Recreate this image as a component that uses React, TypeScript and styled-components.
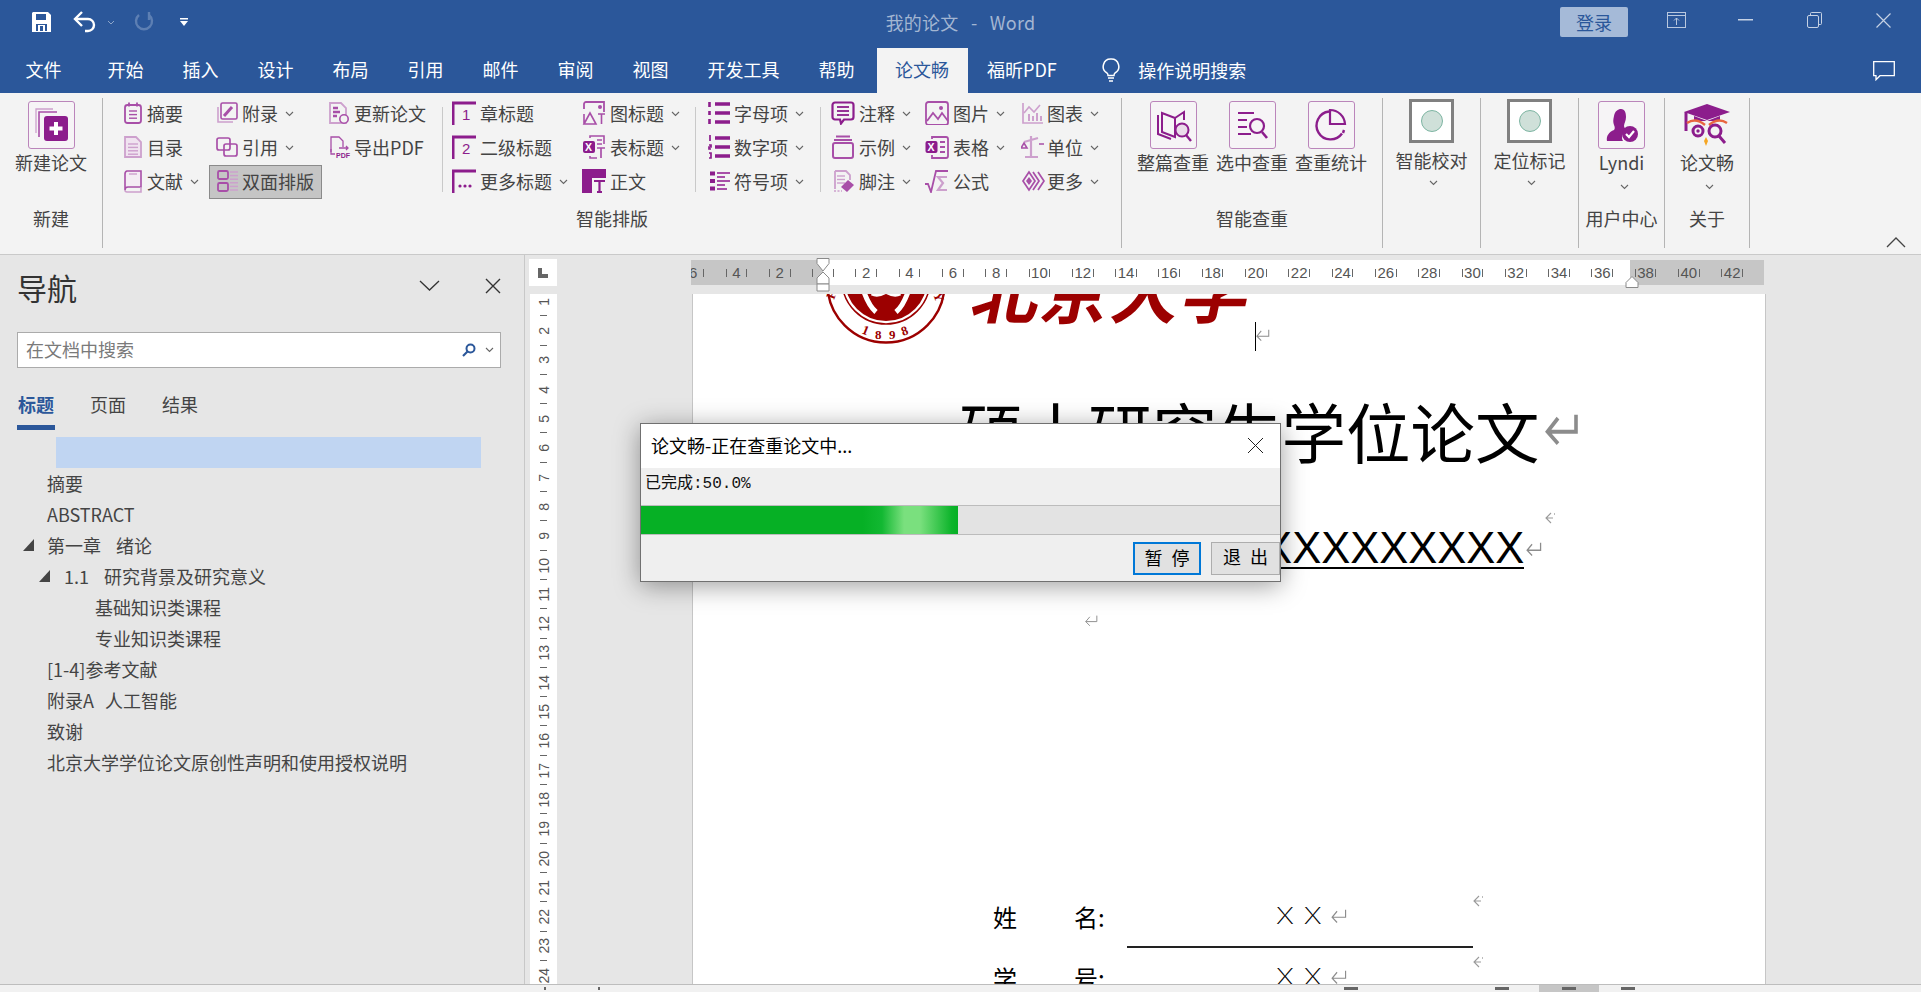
import React from "react";
import styled, { createGlobalStyle } from "styled-components";

const P = "#8c1d8c";
const M = "#a84fa8";
const L = "#cda0cd";
const FONT = `"Noto Sans CJK SC", "Noto Sans", sans-serif`;

const Global = createGlobalStyle`
  html, body { margin: 0; padding: 0; background: #e6e6e6; overflow: hidden; }
  * { box-sizing: border-box; }
  body { font-family: ${FONT}; }
`;

const Root = styled.div`
  position: relative;
  width: 1921px;
  height: 992px;
  overflow: hidden;
  display: flex;
  flex-direction: column;
  font-family: ${FONT};
`;

/* ---------- title bar ---------- */
const TitleBar = styled.div`
  height: 48px;
  background: #2b579a;
  display: grid;
  grid-template-columns: 1fr auto 1fr;
  align-items: flex-start;
`;
const Quick = styled.div`
  display: flex;
  align-items: center;
  height: 44px;
  padding-left: 32px;
`;
const QuickIcon = styled.svg<{ $gap?: number }>`
  display: block;
  margin-left: ${(p) => p.$gap ?? 0}px;
`;
const DocTitle = styled.div`
  height: 44px;
  line-height: 44px;
  font-size: 18px;
  color: #a3b6d2;
  white-space: pre;
  word-spacing: 2px;
  letter-spacing: 0.2px;
`;
const WinControls = styled.div`
  display: flex;
  justify-content: flex-end;
  align-items: flex-start;
  padding-right: 3px;
`;
const Login = styled.div`
  width: 68px;
  height: 30px;
  margin: 7px 14px 0 0;
  border-radius: 2px;
  background: #a5bad8;
  color: #2b579a;
  font-size: 18px;
  line-height: 30px;
  text-align: center;
`;
const WinBtn = styled.div`
  width: 69px;
  height: 40px;
  display: flex;
  align-items: center;
  justify-content: center;
`;

/* ---------- tabs ---------- */
const TabBar = styled.div`
  height: 45px;
  background: #2b579a;
  display: flex;
  align-items: stretch;
  padding-left: 6px;
`;
const Tab = styled.div`
  padding: 0 19.5px;
  color: #fff;
  font-size: 18px;
  line-height: 43px;
  white-space: nowrap;
`;
const FileTab = styled(Tab)`
  margin-right: 7px;
`;
const ActiveTab = styled(Tab)`
  padding: 0 18.5px;
  margin-left: 2.5px;
  background: #f3f3f3;
  color: #2b579a;
`;
const HelpSearch = styled.div`
  display: flex;
  align-items: center;
  margin-left: 26px;
  gap: 18px;
  color: #fff;
  font-size: 18px;
  height: 43px;
`;
const CommentBtn = styled.div`
  margin-left: auto;
  padding: 13px 26px 0 0;
`;

/* ---------- ribbon ---------- */
const Ribbon = styled.div`
  position: relative;
  height: 162px;
  background: #f3f3f3;
  border-bottom: 1px solid #c9c9c9;
  display: flex;
  align-items: flex-start;
  color: #444;
  font-size: 18px;
`;
const Group = styled.div<{ $w: number }>`
  width: ${(p) => p.$w}px;
  height: 150px;
  margin-top: 5px;
  border-right: 1px solid #b4b4b4;
  display: flex;
  flex-direction: column;
`;
const GroupBody = styled.div<{ $center?: boolean; $pad?: number }>`
  height: 110px;
  display: flex;
  align-items: flex-start;
  justify-content: ${(p) => (p.$center ? "center" : "flex-start")};
  padding-left: ${(p) => p.$pad ?? 0}px;
`;
const GroupLabel = styled.div`
  height: 20px;
  line-height: 20px;
  text-align: center;
  font-size: 18px;
  color: #444;
`;
const BigBtn = styled.div`
  width: 79px;
  display: flex;
  flex-direction: column;
  align-items: center;
  padding-top: 3px;
  flex-shrink: 0;
`;
const IconBox = styled.div`
  width: 47px;
  height: 48px;
  border: 1px solid #bb85bb;
  border-radius: 3px;
  background: #f6f4f6;
  display: flex;
  align-items: center;
  justify-content: center;
`;
const BigText = styled.div`
  margin-top: 2px;
  height: 22px;
  line-height: 22px;
  white-space: nowrap;
  font-size: 18px;
`;
const DropChevron = styled.div<{ $top: number; $shift?: number }>`
  margin-top: ${(p) => p.$top}px;
  margin-left: ${(p) => p.$shift ?? 0}px;
  line-height: 0;
`;
const StatusTile = styled.div`
  width: 45px;
  height: 44px;
  border: 3px solid #808080;
  background: #fff;
  display: flex;
  align-items: center;
  justify-content: center;
`;
const StatusDot = styled.div`
  width: 22px;
  height: 22px;
  border-radius: 50%;
  background: #cfe0d9;
  border: 1px solid #7db5a2;
`;
const TileBtn = styled(BigBtn)`
  padding-top: 1px;
`;
const TileText = styled(BigText)`
  margin-top: 6px;
`;
const Col = styled.div<{ $w: number; $pad: number; $slot: number }>`
  width: ${(p) => p.$w}px;
  flex-shrink: 0;
  margin-top: -1px;
  --pad: ${(p) => p.$pad}px;
  --slot: ${(p) => p.$slot}px;
`;
const Item = styled.div<{ $on?: boolean }>`
  height: 34px;
  display: flex;
  align-items: center;
  padding-left: var(--pad);
  padding-bottom: 2px;
  white-space: nowrap;
  font-size: 18px;
  background: ${(p) => (p.$on ? "#c5c5c5" : "transparent")};
  box-shadow: ${(p) => (p.$on ? "inset 0 0 0 1px #8a8a8a" : "none")};
`;
const ItemIcon = styled.span`
  width: var(--slot);
  flex-shrink: 0;
  display: flex;
  align-items: center;
  line-height: 0;
`;
const ItemChev = styled.span`
  margin-left: 7px;
  line-height: 0;
`;
const VSep = styled.div`
  width: 1px;
  height: 85px;
  margin-top: 9px;
  background: #c9c9c9;
  flex-shrink: 0;
`;
const Collapse = styled.div`
  position: absolute;
  right: 15px;
  bottom: 6px;
  line-height: 0;
`;

/* ---------- workspace ---------- */
const Workspace = styled.div`
  flex: 1;
  min-height: 0;
  display: flex;
  background: #e6e6e6;
`;
const Nav = styled.div`
  width: 525px;
  flex-shrink: 0;
  border-right: 1px solid #c8c8c8;
  padding: 0 23px 0 17px;
  color: #444;
`;
const NavHead = styled.div`
  height: 77px;
  display: flex;
  align-items: center;
  padding-top: 0;
`;
const NavTitle = styled.div`
  font-size: 30px;
  line-height: 40px;
  color: #333;
  margin: -14px 0 0 0;
`;
const NavBtns = styled.div`
  margin-left: auto;
  display: flex;
  align-items: center;
  gap: 45px;
  margin-top: -16px;
`;
const SearchBox = styled.div`
  height: 36px;
  width: 484px;
  background: #fff;
  border: 1px solid #ababab;
  display: flex;
  align-items: center;
  padding: 0 6px 3px 8px;
  font-size: 18px;
  color: #7a7a7a;
`;
const SearchTools = styled.div`
  margin-left: auto;
  display: flex;
  align-items: center;
  gap: 9px;
  line-height: 0;
  margin-top: 2px;
`;
const NavTabs = styled.div`
  display: flex;
  gap: 35px;
  margin-top: 21px;
  height: 41px;
  padding-left: 1px;
  margin-bottom: 7px;
`;
const NavTab = styled.div<{ $on?: boolean }>`
  position: relative;
  font-size: 18px;
  line-height: 30px;
  color: ${(p) => (p.$on ? "#2b579a" : "#444")};
  font-weight: ${(p) => (p.$on ? 700 : 400)};
  border-bottom: ${(p) => (p.$on ? "5px solid #2b579a" : "none")};
  height: 41px;
  padding: 0 1px;
  margin-left: -1px;
`;
const NavHighlight = styled.div`
  height: 31px;
  width: 425px;
  margin: 0 0 -1px 39px;
  background: #c0d5f2;
`;
const NavRow = styled.div<{ $pad: number }>`
  height: 31px;
  display: flex;
  align-items: center;
  padding-left: ${(p) => p.$pad}px;
  font-size: 18px;
  color: #444;
  white-space: pre;
`;
const Tri = styled.svg<{ $after: number }>`
  margin-right: ${(p) => p.$after}px;
  flex-shrink: 0;
`;
const NavGap = styled.span<{ $w: number }>`
  display: inline-block;
  width: ${(p) => p.$w}px;
`;

const VRulerCol = styled.div`
  width: 32px;
  flex-shrink: 0;
  padding: 4px 0 0 4px;
  display: flex;
  flex-direction: column;
`;
const Corner = styled.div`
  width: 28px;
  height: 27px;
  background: #fff;
  display: flex;
  align-items: center;
  justify-content: center;
`;
const VRuler = styled.div`
  flex: 1;
  min-height: 0;
  margin: 8px 0 0 1px;
  background: #fff;
  overflow: hidden;
`;
const VCells = styled.div`
  margin-top: -7px;
`;
const VCell = styled.div`
  height: 29.3px;
  position: relative;
  display: flex;
  align-items: center;
  justify-content: center;
`;
const VNum = styled.span`
  writing-mode: vertical-rl;
  transform: rotate(180deg);
  font: 14px "Liberation Sans", sans-serif;
  color: #555;
  line-height: 14px;
`;
const VTick = styled.i`
  position: absolute;
  left: 10px;
  bottom: 0;
  width: 7px;
  height: 1px;
  background: #666;
`;

const DocArea = styled.div`
  flex: 1;
  min-width: 0;
  display: flex;
  flex-direction: column;
  padding-left: 134px;
`;
const HRulerRow = styled.div`
  position: relative;
  height: 39px;
  padding-top: 5px;
  flex-shrink: 0;
`;
const HRuler = styled.div`
  width: 1073px;
  height: 25px;
  background: linear-gradient(
    90deg,
    #c6c6c6 0,
    #c6c6c6 132px,
    #fff 132px,
    #fff 939px,
    #c6c6c6 939px,
    #c6c6c6 100%
  );
  overflow: hidden;
  display: flex;
  align-items: center;
  padding-left: 0;
`;
const HCells = styled.div`
  display: flex;
  margin-left: -19.6px;
`;
const HCell = styled.div`
  width: 43.3px;
  flex-shrink: 0;
  padding: 0 10.8px;
  display: flex;
  align-items: center;
  justify-content: space-between;
  position: relative;
  height: 25px;
`;
const HTick = styled.i`
  width: 1px;
  height: 8px;
  background: #666;
`;
const HNum = styled.span`
  position: absolute;
  left: 0;
  right: 0;
  text-align: center;
  font: 15px/25px "Liberation Sans", sans-serif;
  color: #555;
`;
const Marker = styled.svg<{ $x: number; $y: number }>`
  position: absolute;
  left: ${(p) => p.$x}px;
  top: ${(p) => p.$y}px;
`;
const Page = styled.div`
  position: relative;
  width: 1074px;
  margin-left: 1px;
  flex: 1;
  min-height: 0;
  overflow: hidden;
  background: #fff;
  border-left: 1px solid #c6c6c6;
  border-right: 1px solid #c6c6c6;
`;
const LogoRow = styled.div`
  height: 50px;
  display: flex;
  align-items: flex-end;
  padding-left: 133px;
`;
const Seal = styled.svg`
  flex-shrink: 0;
  display: block;
`;
const Calligraphy = styled.div`
  margin: 0 0 -1px 24px;
  font-size: 68px;
  font-weight: 700;
  line-height: 70px;
  height: 70px;
  letter-spacing: 2px;
  color: #9c0000;
  white-space: nowrap;
  transform: skewX(-12deg) translateY(-21px);
`;
const Caret = styled.div`
  position: absolute;
  left: 562px;
  top: 28px;
  width: 1px;
  height: 29px;
  background: #000;
`;
const CaretMark = styled.div`
  position: absolute;
  left: 562px;
  top: 35px;
  line-height: 0;
`;
const ThesisTitle = styled.div`
  margin-top: 56px;
  height: 60px;
  padding-left: 266px;
  display: flex;
  align-items: center;
  font-size: 64.5px;
  line-height: 60px;
  color: #000;
  white-space: nowrap;
`;
const MarkRow = styled.div<{ $pad: number; $top: number; $h?: number }>`
  margin-top: ${(p) => p.$top}px;
  padding-left: ${(p) => p.$pad}px;
  height: ${(p) => p.$h ?? 12}px;
  line-height: 0;
`;
const SchoolRow = styled.div`
  margin-top: 6px;
  height: 39px;
  padding-left: 338px;
  display: flex;
  align-items: flex-start;
`;
const SchoolText = styled.span`
  font-family: "Liberation Sans Narrow", "Liberation Sans", sans-serif;
  font-size: 43.5px;
  line-height: 36px;
  height: 39px;
  color: #000;
  border-bottom: 2.5px solid #000;
  white-space: nowrap;
`;
const MarkInline = styled.span<{ $left: number; $top?: number }>`
  margin-left: ${(p) => p.$left}px;
  margin-top: ${(p) => p.$top ?? 0}px;
  line-height: 0;
  display: block;
`;
const NameRow = styled.div`
  margin-top: -3px;
  height: 25px;
  padding-left: 300px;
  display: flex;
  align-items: center;
  font-size: 24px;
  line-height: 25px;
  color: #000;
  white-space: nowrap;
`;
const NameCell = styled.span<{ $w: number }>`
  width: ${(p) => p.$w}px;
  flex-shrink: 0;
`;
const NameValue = styled.span`
  display: inline-block;
  font-family: Inter, "Liberation Sans", sans-serif;
  font-weight: 200;
  font-size: 23px;
  letter-spacing: 8px;
  width: 54px;
  flex-shrink: 0;
  transform: scaleX(1.22);
  transform-origin: left center;
`;
const NameLine = styled.div`
  margin: 17px 0 0 434px;
  width: 346px;
  height: 2px;
  background: #222;
`;

const StatusBar = styled.div`
  height: 8px;
  flex-shrink: 0;
  background: #f1f1f1;
  border-top: 1px solid #bdbdbd;
  display: flex;
  align-items: flex-start;
  padding-left: 544px;
`;
const StatusMark = styled.i<{ $gap: number; $w: number }>`
  display: block;
  height: 3px;
  margin: 2px 0 0 ${(p) => p.$gap}px;
  width: ${(p) => p.$w}px;
  background: #666;
`;
const StatusOn = styled.div`
  width: 60px;
  height: 8px;
  margin-left: 30px;
  background: #c6c6c6;
  display: flex;
  justify-content: center;
`;

/* ---------- dialog ---------- */
const Dialog = styled.div`
  position: absolute;
  left: 640px;
  top: 423px;
  width: 641px;
  height: 159px;
  border: 1px solid #707070;
  background: #efefef;
  box-shadow: 0 4px 24px rgba(0, 0, 0, 0.38);
  display: flex;
  flex-direction: column;
  color: #000;
`;
const DialogHead = styled.div`
  height: 44px;
  background: #fff;
  display: flex;
  align-items: center;
  justify-content: space-between;
  padding: 0 16px 2px 10px;
  font-size: 18px;
`;
const DialogStatus = styled.div`
  height: 37px;
  padding-left: 4px;
  line-height: 32px;
  font-family: "Liberation Mono", "Noto Sans CJK SC", monospace;
  font-size: 16px;
  color: #111;
`;
const Track = styled.div`
  height: 30px;
  background: #e3e3e3;
  border-top: 1px solid #bcbcbc;
  border-bottom: 1px solid #bcbcbc;
`;
const Fill = styled.div`
  height: 100%;
  background: linear-gradient(
    90deg,
    #06b025 0,
    #06b025 70%,
    #12b832 76%,
    #7ae07e 83%,
    #7ae07e 88%,
    #0db42b 98%,
    #06b025 100%
  );
`;
const DialogButtons = styled.div`
  flex: 1;
  display: flex;
  justify-content: flex-end;
  gap: 10px;
  padding-top: 7px;
`;
const DlgBtn = styled.div<{ $primary?: boolean }>`
  width: ${(p) => (p.$primary ? 68 : 69)}px;
  height: 33px;
  background: #e1e1e1;
  border: ${(p) => (p.$primary ? "2px solid #0078d7" : "1px solid #adadad")};
  font-size: 18px;
  line-height: 27px;
  text-align: center;
  letter-spacing: 9px;
  padding-left: 9px;
  white-space: nowrap;
`;

/* ---------- drawings ---------- */
const Chev = ({ c = "#666" }: { c?: string }) => (
  <svg width="9" height="6" viewBox="0 0 9 6">
    <path d="M1 1l3.5 3.5L8 1" fill="none" stroke={c} strokeWidth="1.1" />
  </svg>
);
const S = ({ children, w = 24, h = 24 }: { children: React.ReactNode; w?: number; h?: number }) => (
  <svg width={w} height={h} viewBox={`0 0 ${w} ${h}`} fill="none">
    {children}
  </svg>
);
const Lines = ({ x, y, w, n, gap, c, sw = 1.4 }: { x: number; y: number; w: number; n: number; gap: number; c: string; sw?: number }) => (
  <>
    {Array.from({ length: n }).map((_, i) => (
      <path key={i} d={`M${x} ${y + i * gap}h${w}`} stroke={c} strokeWidth={sw} />
    ))}
  </>
);
const Corner1 = ({ label, dots }: { label?: string; dots?: boolean }) => (
  <S>
    <path d="M1 24V2h23" stroke={P} strokeWidth="3" />
    {label && (
      <text x="10" y="19" fontSize="15" fill={P} fontFamily="Liberation Sans">
        {label}
      </text>
    )}
    {dots && (
      <g fill={P}>
        <circle cx="8" cy="17" r="1.6" />
        <circle cx="13" cy="17" r="1.6" />
        <circle cx="18" cy="17" r="1.6" />
      </g>
    )}
  </S>
);
const icons: Record<string, React.ReactNode> = {
  abstract: (
    <S>
      <rect x="3" y="4" width="16" height="18" rx="2.5" stroke={M} strokeWidth="1.8" />
      <path d="M7 1.5v4M15 1.5v4" stroke={M} strokeWidth="1.8" />
      <Lines x={7} y={10} w={8} n={3} gap={3.6} c={M} />
    </S>
  ),
  toc: (
    <S>
      <path d="M3 2h11l5 5v15H3z" fill="#f0e3f0" stroke={L} strokeWidth="1.8" />
      <Lines x={6} y={9} w={10} n={4} gap={3.4} c={L} />
    </S>
  ),
  book: (
    <S>
      <path d="M5 2h14v16H6a3 3 0 0 0-3 3V5a3 3 0 0 1 2-3z" fill="#f4ecf4" stroke={M} strokeWidth="1.6" />
      <path d="M3 21a2 2 0 0 0 2 2h14v-5" stroke={L} strokeWidth="1.6" />
      <path d="M7 5h8" stroke={L} strokeWidth="1.4" />
    </S>
  ),
  append: (
    <S>
      <rect x="6" y="2" width="16" height="16" rx="1.5" stroke={M} strokeWidth="1.6" />
      <path d="M3 6v15h15" stroke={L} strokeWidth="1.6" />
      <path d="M9 15l8-9" stroke={M} strokeWidth="3" />
    </S>
  ),
  cite: (
    <S>
      <rect x="2" y="3" width="13" height="12" rx="2" stroke={M} strokeWidth="1.7" />
      <rect x="9" y="9" width="13" height="12" rx="2" stroke={M} strokeWidth="1.7" />
    </S>
  ),
  duplex: (
    <S>
      <rect x="3" y="2" width="10" height="8" rx="1.5" stroke={M} strokeWidth="1.8" />
      <rect x="3" y="14" width="10" height="8" rx="1.5" stroke={M} strokeWidth="1.8" />
      <Lines x={15} y={3} w={8} n={6} gap={3.6} c={L} sw={1.5} />
    </S>
  ),
  update: (
    <S>
      <path d="M3 2h11l5 5v15H3z" stroke={L} strokeWidth="1.8" />
      <path d="M6 7h5M6 11h7M6 15h4" stroke={M} strokeWidth="2.4" />
      <circle cx="17" cy="18" r="4.2" fill="#f3f3f3" stroke={M} strokeWidth="1.6" />
    </S>
  ),
  pdf: (
    <S>
      <path d="M4 17V2h8l4 4v6" stroke={M} strokeWidth="1.3" />
      <path d="M4 14v5h4M12 13h9M19 11l2 2-2 2" stroke={M} strokeWidth="1.3" />
      <text x="9" y="23" fontSize="7" fontWeight="700" fill={P} fontFamily="Liberation Sans">
        PDF
      </text>
    </S>
  ),
  h1: <Corner1 label="1" />,
  h2: <Corner1 label="2" />,
  hmore: <Corner1 dots />,
  figcap: (
    <S>
      <path d="M2 8V3a2 2 0 0 1 2-2h18v10" stroke={M} strokeWidth="1.8" />
      <path d="M2 23l6-11 6 11zM2 23V13" stroke={M} strokeWidth="1.6" />
      <circle cx="18" cy="6" r="2" fill={M} />
      <path d="M16 13h7M19.5 13v10" stroke={M} strokeWidth="1.6" />
    </S>
  ),
  tabcap: (
    <S>
      <path d="M8 3V1h14v8M8 21v2h7" stroke={M} strokeWidth="1.6" />
      <rect x="1" y="6" width="12" height="12" rx="2" fill={P} />
      <text x="3" y="16" fontSize="10.5" fontWeight="700" fill="#fff" fontFamily="Liberation Sans">
        X
      </text>
      <path d="M15 13h8M19 13v10M15 5h5M15 9h5" stroke={M} strokeWidth="1.7" />
    </S>
  ),
  body: (
    <S>
      <path d="M0 24V0h24v9H10v15z" fill={P} />
      <path d="M12 12h11M17.500 12v11M15 23h5" stroke={P} strokeWidth="2.2" />
    </S>
  ),
  alpha: (
    <S>
      <path d="M7 3h15M7 12h15M7 21h15" stroke={P} strokeWidth="3.4" />
      <path d="M1.500 1v5M1.500 10v4M1.500 18v5" stroke={P} strokeWidth="2.6" />
    </S>
  ),
  num: (
    <S>
      <path d="M7 3h15M7 12h15M7 21h15" stroke={P} strokeWidth="3.4" />
      <path d="M2 0v6M1 10h2v2H1v2h2M1 18h2v5H1" stroke={P} strokeWidth="1.7" />
    </S>
  ),
  sym: (
    <S>
      <path d="M9 4h13M9 8h8M9 12h13M9 16h8M9 20h10" stroke={M} strokeWidth="1.8" />
      <rect x="2" y="2.500" width="5" height="4" fill={P} />
      <rect x="2" y="10" width="5" height="4" fill={P} />
      <rect x="2" y="17.500" width="5" height="4" fill={P} />
    </S>
  ),
  note: (
    <S>
      <path d="M4 1.500h16a2.500 2.500 0 0 1 2.500 2.500v12a2.500 2.500 0 0 1-2.500 2.500H13l-3 4-1-4H4A2.500 2.500 0 0 1 1.500 16V4A2.500 2.500 0 0 1 4 1.500z" stroke={P} strokeWidth="2.2" />
      <Lines x={6} y={6} w={12} n={3} gap={4} c={P} sw={1.8} />
    </S>
  ),
  sample: (
    <S>
      <rect x="2" y="8" width="20" height="15" rx="2" stroke={M} strokeWidth="2" />
      <path d="M5 1.500h14M3 5h18" stroke={M} strokeWidth="2" />
    </S>
  ),
  foot: (
    <S>
      <path d="M4 2h11l4 4v5M4 2v18" stroke={L} strokeWidth="1.8" />
      <Lines x={6} y={7} w={8} n={3} gap={3.5} c={L} />
      <path d="M10 18l7-7 6 5-7 7z" fill={M} />
      <path d="M3 22h8" stroke={L} strokeWidth="1.6" strokeDasharray="2 1.500" />
    </S>
  ),
  image: (
    <S>
      <rect x="1" y="1" width="22" height="23" rx="2.500" stroke={M} strokeWidth="1.8" />
      <path d="M2 20l6-8 5 6 4-6 6 8" stroke={M} strokeWidth="1.8" />
      <circle cx="16" cy="7" r="2" fill={M} />
    </S>
  ),
  table: (
    <S>
      <path d="M7 4V2h14a2 2 0 0 1 2 2v17a2 2 0 0 1-2 2H7v-3" stroke={M} strokeWidth="1.8" />
      <rect x="0.500" y="6" width="12" height="12" rx="2" fill={P} />
      <text x="2.500" y="16" fontSize="10.500" fontWeight="700" fill="#fff" fontFamily="Liberation Sans">
        X
      </text>
      <path d="M15 7h5M15 12h5M15 17h5" stroke={M} strokeWidth="1.8" />
    </S>
  ),
  formula: (
    <S>
      <path d="M0 15h3l3 8L11 2h12" stroke={M} strokeWidth="1.8" />
      <path d="M22 8h-9l5 6-5 7h9" stroke={L} strokeWidth="2.2" />
    </S>
  ),
  chart: (
    <S>
      <path d="M2 2v20h20" stroke={L} strokeWidth="1.7" />
      <path d="M3 12l5-6 5 5 6-7" stroke={L} strokeWidth="1.6" />
      <path d="M8 20v-7M12 20v-5M16 20v-8M20 20v-5" stroke={L} strokeWidth="2" />
    </S>
  ),
  unit: (
    <S>
      <path d="M10 1v21M4 22h13M3 7l14-4" stroke={L} strokeWidth="2.2" />
      <path d="M0 13l3-5 3 5zM18 9h5" stroke={M} strokeWidth="1.6" />
    </S>
  ),
  more: (
    <S>
      <path d="M8 3l-6 9 6 9 6-9z" stroke={M} strokeWidth="1.700" />
      <path d="M12 3l6 9-6 9M17 3l6 9-6 9" stroke={M} strokeWidth="1.700" />
      <path d="M8 8l-3 4 3 4 3-4z" fill={M} />
    </S>
  ),
};

type Entry = { k: string; t: string; chev?: boolean; on?: boolean };
const Column = ({ w, pad, slot, items }: { w: number; pad: number; slot: number; items: Entry[] }) => (
  <Col $w={w} $pad={pad} $slot={slot}>
    {items.map((it) => (
      <Item key={it.t} $on={it.on}>
        <ItemIcon>{icons[it.k]}</ItemIcon>
        {it.t}
        {it.chev && (
          <ItemChev>
            <Chev />
          </ItemChev>
        )}
      </Item>
    ))}
  </Col>
);

const ReturnMark = ({ w = 17, h = 15, sw = 1.6 }: { w?: number; h?: number; sw?: number }) => (
  <svg width={w} height={h} viewBox="0 0 24 20" fill="none" preserveAspectRatio="none">
    <path d="M22 1v10H3M10 3l-7 8 7 7" stroke="#8c8c8c" strokeWidth={sw} />
  </svg>
);
const PartialMark = () => (
  <svg width="11" height="12" viewBox="0 0 11 12" fill="none">
    <path d="M6 1L1 6l5 5M1 6h7" stroke="#9a9a9a" strokeWidth="1.100" />
    <path d="M9.500 1v2" stroke="#bbb" />
  </svg>
);

const navTree = [
  { pad: 30, t: "摘要" },
  { pad: 30, t: "ABSTRACT" },
  { pad: 6, tri: 13, t: "第一章", gap: 15, t2: "绪论" },
  { pad: 22, tri: 14, t: "1.1", gap: 15, t2: "研究背景及研究意义" },
  { pad: 78, t: "基础知识类课程" },
  { pad: 78, t: "专业知识类课程" },
  { pad: 30, t: "[1-4]参考文献" },
  { pad: 30, t: "附录A", gap: 11, t2: "人工智能" },
  { pad: 30, t: "致谢" },
  { pad: 30, t: "北京大学学位论文原创性声明和使用授权说明" },
];

export default function App() {
  const hCells = Array.from({ length: 25 }, (_, i) => Math.abs(i - 3) * 2);
  const vCells = Array.from({ length: 24 }, (_, i) => i + 1);
  return (
    <Root>
      <Global />
      <TitleBar>
        <Quick>
          <QuickIcon width="19" height="20" viewBox="0 0 19 20">
            <path d="M1 0h15l3 3v17H0V1z" fill="#fff" />
            <rect x="4" y="2" width="10" height="6" fill="#2b579a" />
            <path d="M4 12h11v7H4z" fill="#2b579a" />
            <path d="M6 13h7v6H6z" fill="#fff" />
            <path d="M8 14h3v5H8z" fill="#2b579a" />
          </QuickIcon>
          <QuickIcon $gap={22} width="23" height="22" viewBox="0 0 23 22" fill="none">
            <path d="M2 8h13a6 6 0 0 1 0 12h-3" stroke="#fff" strokeWidth="2.400" />
            <path d="M9 1L2 8l7 7" stroke="#fff" strokeWidth="2.400" />
          </QuickIcon>
          <QuickIcon $gap={11} width="8" height="5" viewBox="0 0 8 5" fill="none">
            <path d="M1 1l3 3 3-3" stroke="#8ea6c9" strokeWidth="1" />
          </QuickIcon>
          <QuickIcon $gap={19} width="20" height="22" viewBox="0 0 20 22" fill="none">
            <path d="M5 4a8 8 0 1 0 10 0" stroke="#5d7fb3" strokeWidth="2.400" />
            <path d="M15 1v8" stroke="#5d7fb3" strokeWidth="2.400" />
          </QuickIcon>
          <QuickIcon $gap={26} width="8" height="8" viewBox="0 0 8 8">
            <path d="M0 0h8v1.500H0zM0 3h8L4 8z" fill="#fff" />
          </QuickIcon>
        </Quick>
        <DocTitle>我的论文  -  Word</DocTitle>
        <WinControls>
          <Login>登录</Login>
          <WinBtn>
            <svg width="19" height="16" viewBox="0 0 19 16" fill="none">
              <rect x="0.500" y="0.500" width="18" height="15" stroke="#b9c8df" />
              <path d="M0 3.500h19M9.500 13V6M7 8.500l2.500-2.500 2.500 2.500" stroke="#b9c8df" />
            </svg>
          </WinBtn>
          <WinBtn>
            <svg width="15" height="2" viewBox="0 0 15 2">
              <rect width="15" height="1.500" fill="#c6d2e4" />
            </svg>
          </WinBtn>
          <WinBtn>
            <svg width="15" height="16" viewBox="0 0 15 16" fill="none">
              <rect x="0.500" y="3.500" width="11" height="12" rx="1.500" stroke="#c6d2e4" />
              <path d="M3.500 3V1.500a1 1 0 0 1 1-1h9a1 1 0 0 1 1 1v10a1 1 0 0 1-1 1H12" stroke="#c6d2e4" />
            </svg>
          </WinBtn>
          <WinBtn>
            <svg width="15" height="15" viewBox="0 0 15 15" fill="none">
              <path d="M0.500 0.500l14 14M14.500 0.500l-14 14" stroke="#c6d2e4" strokeWidth="1.200" />
            </svg>
          </WinBtn>
        </WinControls>
      </TitleBar>

      <TabBar>
        <FileTab>文件</FileTab>
        <Tab>开始</Tab>
        <Tab>插入</Tab>
        <Tab>设计</Tab>
        <Tab>布局</Tab>
        <Tab>引用</Tab>
        <Tab>邮件</Tab>
        <Tab>审阅</Tab>
        <Tab>视图</Tab>
        <Tab>开发工具</Tab>
        <Tab>帮助</Tab>
        <ActiveTab>论文畅</ActiveTab>
        <Tab>福昕PDF</Tab>
        <HelpSearch>
          <svg width="18" height="24" viewBox="0 0 18 24" fill="none">
            <path d="M9 1a7.500 7.500 0 0 0-4 14c.7.500 1 1.300 1 2.500h6c0-1.200.3-2 1-2.500A7.500 7.500 0 0 0 9 1z" stroke="#fff" strokeWidth="1.500" />
            <path d="M6 20h6M7 23h4" stroke="#fff" strokeWidth="1.500" />
          </svg>
          操作说明搜索
        </HelpSearch>
        <CommentBtn>
          <svg width="22" height="20" viewBox="0 0 22 20" fill="none">
            <path d="M0.700 0.700h20.600v14H7l-4 4v-4H0.700z" stroke="#fff" strokeWidth="1.300" />
          </svg>
        </CommentBtn>
      </TabBar>

      <Ribbon>
        <Group $w={103}>
          <GroupBody $center>
            <BigBtn>
              <IconBox>
                <S w={36} h={36}>
                  <path d="M6 30V5h18" stroke={M} strokeWidth="1.600" />
                  <path d="M2 26V2h17" stroke={L} strokeWidth="1.300" transform="translate(1 0)" />
                  <rect x="11" y="9" width="24" height="25" rx="3" fill={P} />
                  <path d="M23 15v13M16.500 21.500h13" stroke="#fff" strokeWidth="4" />
                </S>
              </IconBox>
              <BigText>新建论文</BigText>
            </BigBtn>
          </GroupBody>
          <GroupLabel>新建</GroupLabel>
        </Group>

        <Group $w={1019}>
          <GroupBody $pad={13}>
            <Column
              w={93}
              pad={6}
              slot={25}
              items={[
                { k: "abstract", t: "摘要" },
                { k: "toc", t: "目录" },
                { k: "book", t: "文献", chev: true },
              ]}
            />
            <Column
              w={113}
              pad={6}
              slot={27}
              items={[
                { k: "append", t: "附录", chev: true },
                { k: "cite", t: "引用", chev: true },
                { k: "duplex", t: "双面排版", on: true },
              ]}
            />
            <Column
              w={120}
              pad={5}
              slot={27}
              items={[
                { k: "update", t: "更新论文" },
                { k: "pdf", t: "导出PDF" },
              ]}
            />
            <VSep />
            <Column
              w={139}
              pad={9}
              slot={28}
              items={[
                { k: "h1", t: "章标题" },
                { k: "h2", t: "二级标题" },
                { k: "hmore", t: "更多标题", chev: true },
              ]}
            />
            <Column
              w={113}
              pad={0}
              slot={28}
              items={[
                { k: "figcap", t: "图标题", chev: true },
                { k: "tabcap", t: "表标题", chev: true },
                { k: "body", t: "正文" },
              ]}
            />
            <VSep />
            <Column
              w={124}
              pad={12}
              slot={26}
              items={[
                { k: "alpha", t: "字母项", chev: true },
                { k: "num", t: "数字项", chev: true },
                { k: "sym", t: "符号项", chev: true },
              ]}
            />
            <VSep />
            <Column
              w={104}
              pad={10}
              slot={28}
              items={[
                { k: "note", t: "注释", chev: true },
                { k: "sample", t: "示例", chev: true },
                { k: "foot", t: "脚注", chev: true },
              ]}
            />
            <Column
              w={96}
              pad={0}
              slot={28}
              items={[
                { k: "image", t: "图片", chev: true },
                { k: "table", t: "表格", chev: true },
                { k: "formula", t: "公式" },
              ]}
            />
            <Column
              w={98}
              pad={0}
              slot={26}
              items={[
                { k: "chart", t: "图表", chev: true },
                { k: "unit", t: "单位", chev: true },
                { k: "more", t: "更多", chev: true },
              ]}
            />
          </GroupBody>
          <GroupLabel>智能排版</GroupLabel>
        </Group>

        <Group $w={261}>
          <GroupBody $center>
            <BigBtn>
              <IconBox>
                <S w={38} h={38}>
                  <path d="M8 7v19l13 5V12zM4 9v19l13 5M21 12l9-6v8" stroke={P} strokeWidth="2" />
                  <circle cx="28" cy="24" r="6.500" fill="#eadcea" stroke={P} strokeWidth="2" />
                  <path d="M32 29l5 6" stroke={P} strokeWidth="2.400" />
                </S>
              </IconBox>
              <BigText>整篇查重</BigText>
            </BigBtn>
            <BigBtn>
              <IconBox>
                <S w={38} h={38}>
                  <path d="M5 7h16M5 14h9M5 21h9M5 28h13" stroke={P} strokeWidth="2.200" />
                  <circle cx="24" cy="20" r="7" stroke={P} strokeWidth="2.200" />
                  <path d="M29 26l5 6" stroke={P} strokeWidth="2.600" />
                </S>
              </IconBox>
              <BigText>选中查重</BigText>
            </BigBtn>
            <BigBtn>
              <IconBox>
                <S w={38} h={38}>
                  <path d="M17 5.500a14 14 0 1 0 13 22" stroke={P} strokeWidth="2.400" />
                  <path d="M18 4v14h15a15 15 0 0 0-15-14z" stroke={P} strokeWidth="2.200" />
                  <path d="M32 24l-1 3" stroke={P} strokeWidth="2.400" />
                </S>
              </IconBox>
              <BigText>查重统计</BigText>
            </BigBtn>
          </GroupBody>
          <GroupLabel>智能查重</GroupLabel>
        </Group>

        <Group $w={98}>
          <GroupBody $center>
            <TileBtn>
              <StatusTile>
                <StatusDot />
              </StatusTile>
              <TileText>智能校对</TileText>
              <DropChevron $top={7} $shift={3}>
                <Chev />
              </DropChevron>
            </TileBtn>
          </GroupBody>
        </Group>
        <Group $w={98}>
          <GroupBody $center>
            <TileBtn>
              <StatusTile>
                <StatusDot />
              </StatusTile>
              <TileText>定位标记</TileText>
              <DropChevron $top={7} $shift={3}>
                <Chev />
              </DropChevron>
            </TileBtn>
          </GroupBody>
        </Group>
        <Group $w={86}>
          <GroupBody $center>
            <BigBtn>
              <IconBox>
                <S w={34} h={36}>
                  <path d="M16 2c4 0 5 4 5 8 0 4-2 6-2 9 0 2 2 3 3 4a8 8 0 0 0-5 8c0 1 .3 2 1 3H2c-1-5 2-9 7-11 1-1 1-3 0-5-1-3-1-5 0-9 1-5 4-7 7-7z" fill={P} />
                  <circle cx="25" cy="27" r="8" fill={P} />
                  <path d="M21 27l3 3 5-6" stroke="#fff" strokeWidth="2.200" />
                </S>
              </IconBox>
              <BigText>Lyndi</BigText>
              <DropChevron $top={9} $shift={5}>
                <Chev />
              </DropChevron>
            </BigBtn>
          </GroupBody>
          <GroupLabel>用户中心</GroupLabel>
        </Group>
        <Group $w={85}>
          <GroupBody $center>
            <BigBtn>
              <S w={47} h={48}>
                <path d="M23 3L0 11l23 8 23-8z" fill={P} />
                <path d="M10 15v5h26v-5l-13 5z" fill={P} />
                <path d="M2 11v19" stroke={P} strokeWidth="3" />
                <path d="M3 22c6-4 12-3 18 2M43 22c-6-4-12-3-18 2" stroke="#e8663f" strokeWidth="2.400" />
                <circle cx="14" cy="30" r="5" stroke={P} strokeWidth="3" />
                <circle cx="14" cy="30" r="1.700" fill={P} />
                <circle cx="31" cy="30" r="6" stroke={P} strokeWidth="3" />
                <path d="M35 35l6 7" stroke={P} strokeWidth="3" />
                <path d="M22 36l2 4-2 5-2-5z" fill="#f5a623" />
              </S>
              <BigText>论文畅</BigText>
              <DropChevron $top={9} $shift={5}>
                <Chev />
              </DropChevron>
            </BigBtn>
          </GroupBody>
          <GroupLabel>关于</GroupLabel>
        </Group>
        <Collapse>
          <svg width="20" height="11" viewBox="0 0 20 11" fill="none">
            <path d="M1 10l9-9 9 9" stroke="#444" strokeWidth="1.300" />
          </svg>
        </Collapse>
      </Ribbon>

      <Workspace>
        <Nav>
          <NavHead>
            <NavTitle>导航</NavTitle>
            <NavBtns>
              <svg width="21" height="11" viewBox="0 0 21 11" fill="none">
                <path d="M1 1l9.500 9L20 1" stroke="#333" strokeWidth="1.300" />
              </svg>
              <svg width="16" height="16" viewBox="0 0 16 16" fill="none">
                <path d="M1 1l14 14M15 1L1 15" stroke="#333" strokeWidth="1.400" />
              </svg>
            </NavBtns>
          </NavHead>
          <SearchBox>
            在文档中搜索
            <SearchTools>
              <svg width="14" height="14" viewBox="0 0 14 14" fill="none">
                <circle cx="8.500" cy="5.500" r="4" stroke="#2b579a" strokeWidth="2" />
                <path d="M5.500 8.500L1 13" stroke="#2b579a" strokeWidth="2.200" />
              </svg>
              <Chev />
            </SearchTools>
          </SearchBox>
          <NavTabs>
            <NavTab $on>标题</NavTab>
            <NavTab>页面</NavTab>
            <NavTab>结果</NavTab>
          </NavTabs>
          <NavHighlight />
          {navTree.map((r) => (
            <NavRow key={r.t} $pad={r.pad}>
              {r.tri && (
                <Tri $after={r.tri} width="11" height="12" viewBox="0 0 11 12">
                  <path d="M11 0v12H0z" fill="#444" />
                </Tri>
              )}
              {r.t}
              {r.t2 && <NavGap $w={r.gap ?? 0} />}
              {r.t2}
            </NavRow>
          ))}
        </Nav>

        <VRulerCol>
          <Corner>
            <svg width="10" height="10" viewBox="0 0 10 10">
              <path d="M0 0h4v6h6v4H0z" fill="#666" />
            </svg>
          </Corner>
          <VRuler>
            <VCells>
              {vCells.map((n) => (
                <VCell key={n}>
                  <VNum>{n}</VNum>
                  <VTick />
                </VCell>
              ))}
            </VCells>
          </VRuler>
        </VRulerCol>

        <DocArea>
          <HRulerRow>
            <HRuler>
              <HCells>
                {hCells.map((n, i) => (
                  <HCell key={i}>
                    <HTick />
                    {n > 0 && <HNum>{n}</HNum>}
                    <HTick />
                  </HCell>
                ))}
              </HCells>
            </HRuler>
            <Marker $x={125} $y={3} width="14" height="34" viewBox="0 0 14 34" fill="#fff" stroke="#8a8a8a">
              <path d="M1 0.500h12v5L7 13 1 5.500z" />
              <path d="M7 14l6 6v6H1v-6z" />
              <path d="M1 26h12v7H1z" />
            </Marker>
            <Marker $x={934} $y={21} width="14" height="12" viewBox="0 0 14 12" fill="#fff" stroke="#8a8a8a">
              <path d="M7 0.500l6 6v5H1v-5z" />
            </Marker>
          </HRulerRow>
          <Page>
            <LogoRow>
              <Seal width="120" height="120" viewBox="0 0 120 120" fill="none">
                <circle cx="60" cy="60" r="58.500" stroke="#9c0000" strokeWidth="2.400" />
                <circle cx="60" cy="56" r="44" stroke="#9c0000" strokeWidth="1.500" />
                <circle cx="60" cy="56" r="41" fill="#9c0000" />
                <path d="M38 68q5 14 12 20M82 68q-5 14-12 20" stroke="#fff" strokeWidth="5" />
                <path d="M46 69q6 3 14-2 8 5 14 2" stroke="#fff" strokeWidth="5" />
                <g fill="#9c0000" fontSize="13" fontWeight="700" fontFamily="Liberation Serif">
                  <text x="8" y="76" transform="rotate(-70 8 76)">P</text>
                  <text x="107" y="70" transform="rotate(70 107 70)">Y</text>
                  <text x="35" y="109" transform="rotate(22 35 109)">1</text>
                  <text x="49" y="115">8</text>
                  <text x="63" y="115">9</text>
                  <text x="77" y="112" transform="rotate(-20 77 112)">8</text>
                </g>
              </Seal>
              <Calligraphy>北京大学</Calligraphy>
            </LogoRow>
            <Caret />
            <CaretMark>
              <ReturnMark w={15} h={13} />
            </CaretMark>
            <ThesisTitle>
              硕士研究生学位论文
              <MarkInline $left={3}>
                <ReturnMark w={36} h={34} sw={2.400} />
              </MarkInline>
            </ThesisTitle>
            <MarkRow $pad={852} $top={52} $h={12}>
              <PartialMark />
            </MarkRow>
            <SchoolRow>
              <SchoolText>XXXXXXXXXXXXXXXXX</SchoolText>
              <MarkInline $left={1} $top={12}>
                <ReturnMark w={17} h={15} sw={1.800} />
              </MarkInline>
            </SchoolRow>
            <MarkRow $pad={391} $top={46} $h={12}>
              <ReturnMark w={14} h={12} />
            </MarkRow>
            <MarkRow $pad={780} $top={268} $h={12}>
              <PartialMark />
            </MarkRow>
            <NameRow>
              <NameCell $w={81}>姓</NameCell>
              <NameCell $w={202}>名:</NameCell>
              <NameValue>XX</NameValue>
              <ReturnMark />
            </NameRow>
            <NameLine />
            <MarkRow $pad={780} $top={8} $h={12}>
              <PartialMark />
            </MarkRow>
            <NameRow>
              <NameCell $w={81}>学</NameCell>
              <NameCell $w={202}>号:</NameCell>
              <NameValue>XX</NameValue>
              <ReturnMark />
            </NameRow>
          </Page>
        </DocArea>
      </Workspace>

      <StatusBar>
        <StatusMark $gap={0} $w={2} />
        <StatusMark $gap={52} $w={2} />
        <StatusMark $gap={744} $w={14} />
        <StatusMark $gap={137} $w={14} />
        <StatusOn>
          <StatusMark $gap={0} $w={14} />
        </StatusOn>
        <StatusMark $gap={22} $w={14} />
      </StatusBar>

      <Dialog>
        <DialogHead>
          论文畅-正在查重论文中...
          <svg width="17" height="17" viewBox="0 0 17 17" fill="none">
            <path d="M1 1l15 15M16 1L1 16" stroke="#222" strokeWidth="1" />
          </svg>
        </DialogHead>
        <DialogStatus>已完成:50.0%</DialogStatus>
        <Track>
          <Fill style={{ width: "49.6%" }} />
        </Track>
        <DialogButtons>
          <DlgBtn $primary>暂停</DlgBtn>
          <DlgBtn>退出</DlgBtn>
        </DialogButtons>
      </Dialog>
    </Root>
  );
}
